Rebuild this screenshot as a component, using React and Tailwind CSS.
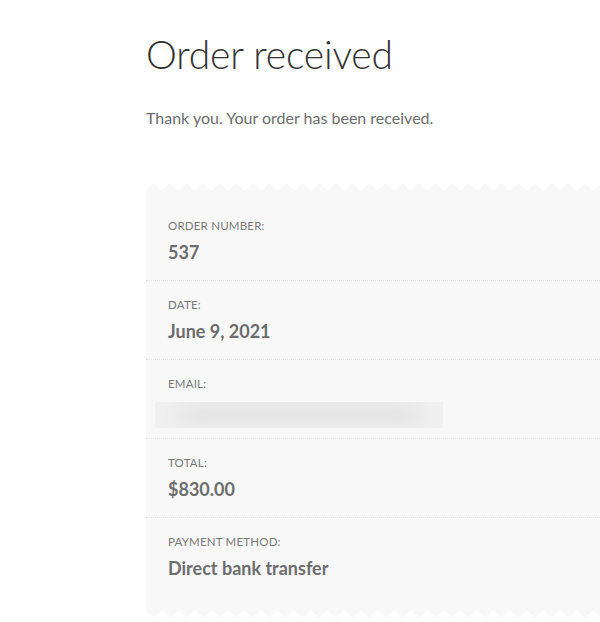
import React from 'react';

const details = [
  { label: 'Order number:', value: '537' },
  { label: 'Date:', value: 'June 9, 2021' },
  { label: 'Email:', value: null },
  { label: 'Total:', value: '$830.00' },
  { label: 'Payment method:', value: 'Direct bank transfer' },
];

function Zigzag({ flip }) {
  // saw-tooth edge of the receipt panel
  const id = flip ? 'zz-bottom' : 'zz-top';
  return (
    <svg className="block w-full h-2" preserveAspectRatio="none">
      <defs>
        <pattern id={id} x="-1" y="0" width="16.6" height="8" patternUnits="userSpaceOnUse">
          {flip ? (
            <polygon points="0,0 16.6,0 8.3,8" fill="#f8f8f8" />
          ) : (
            <polygon points="0,8 8.3,0 16.6,8" fill="#f8f8f8" />
          )}
        </pattern>
      </defs>
      <rect width="100%" height="8" fill={`url(#${id})`} />
    </svg>
  );
}

function App() {
  return (
    <div className="min-h-screen bg-white pl-[146px] overflow-hidden font-['Lato',sans-serif] text-[#6d6d6d]">
      <h1 className="pt-[28px] text-[39px] leading-[52px] font-light text-[#333333] tracking-[-0.2px]">
        Order received
      </h1>
      <p className="mt-[26px] text-[16px] leading-6">Thank you. Your order has been received.</p>

      <div className="mt-[53px] w-[600px]">
        <Zigzag />
        <ul className="bg-[#f8f8f8] pt-[11px] pb-[14px]">
          {details.map((item, i) => (
            <li
              key={item.label}
              className={`px-[22px] pt-4 pb-4 ${i < details.length - 1 ? 'border-b border-dotted border-[#e2e2e2]' : ''}`}
            >
              <div className="text-[11.5px] leading-4 uppercase tracking-[0.2px] text-[#7a7a7a]">{item.label}</div>
              {item.value ? (
                <div className="mt-1.5 text-[18px] leading-6 font-bold">{item.value}</div>
              ) : (
                <div className="mt-[10px] -mb-[6px] -ml-[13px] h-[26px] w-[288px] bg-[#f1f1f1] relative overflow-hidden">
                  <div className="absolute inset-x-5 inset-y-1 bg-[#dedede] blur-md rounded-full" />
                </div>
              )}
            </li>
          ))}
        </ul>
        <Zigzag flip />
      </div>
    </div>
  );
}

export default App;
